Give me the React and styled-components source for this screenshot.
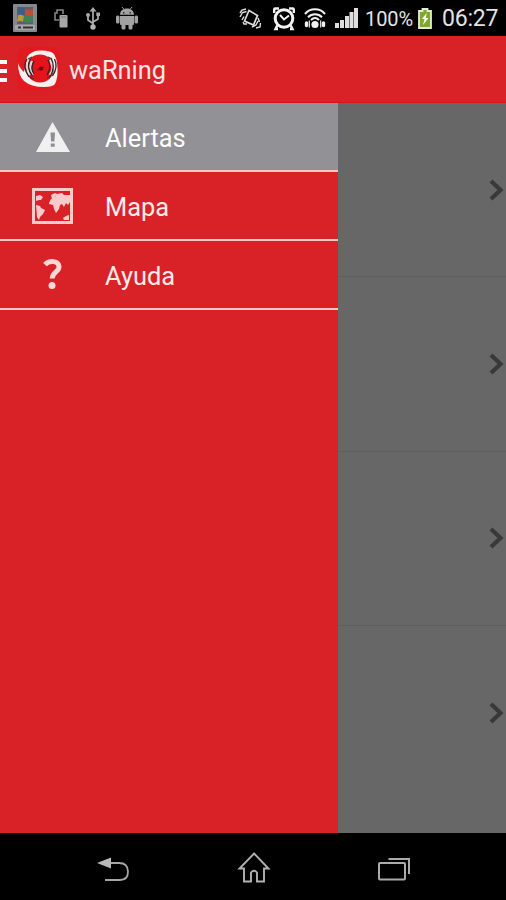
import React from "react";
import styled, { createGlobalStyle } from "styled-components";

const GlobalStyle = createGlobalStyle`
  * { box-sizing: border-box; }
  body { margin: 0; background: #000; font-family: Roboto, "Liberation Sans", sans-serif; }
`;

const Screen = styled.div`
  width: 506px;
  height: 900px;
  display: flex;
  flex-direction: column;
  overflow: hidden;
  background: #000;
`;

const StatusBar = styled.header`
  height: 36px;
  display: flex;
  align-items: center;
  justify-content: space-between;
  padding: 0 8px 0 13px;
  color: #e4e4e4;
`;

const StatusGroup = styled.div`
  display: flex;
  align-items: center;
  gap: ${(p) => p.$gap}px;
`;

const Icon = styled.svg`
  display: block;
  flex: none;
  overflow: visible;
`;

const BatteryLevel = styled.span`
  width: 47px;
  margin: 2px -4px 0 -3px;
  font-size: 20px;
  line-height: 24px;
  letter-spacing: -0.1px;
  white-space: nowrap;
`;

const Clock = styled.span`
  width: 56px;
  margin-top: 1px;
  font-size: 23px;
  line-height: 26px;
  letter-spacing: -0.2px;
  white-space: nowrap;
`;

const ActionBar = styled.div`
  height: 67px;
  display: flex;
  align-items: center;
  background: #d92228;
  border-bottom: 1px solid #d5141b;
`;

const MenuButton = styled.button`
  width: 8px;
  height: 22px;
  display: flex;
  flex-direction: column;
  justify-content: space-between;
  padding: 0;
  margin: 3px 9px 0 0;
  border: 0;
  background: transparent;
`;

const MenuLine = styled.span`
  height: 4px;
  width: 7px;
  background: #fff;
`;

const AppTitle = styled.h1`
  margin: 2px 0 0 9px;
  font-size: 25.4px;
  line-height: 32px;
  font-weight: 400;
  color: #fbe4e4;
`;

const Body = styled.main`
  height: 730px;
  display: flex;
`;

const Drawer = styled.nav`
  width: 338px;
  background: #d92228;
`;

const DrawerItem = styled.a`
  height: 69px;
  display: flex;
  align-items: center;
  border-bottom: 2px solid #fac9c8;
  background: ${(p) => (p.$active ? "#919196" : "#d92228")};
  color: ${(p) => (p.$active ? "#fcfcfc" : "#ffecea")};
`;

const IconSlot = styled.span`
  width: 105px;
  display: flex;
  justify-content: center;
`;

const ItemLabel = styled.span`
  margin-top: 3px;
  font-size: 25.4px;
  line-height: 32px;
`;

const Content = styled.section`
  flex: 1;
  background: #676767;
`;

const ListRow = styled.div`
  height: 174.4px;
  display: flex;
  align-items: center;
  justify-content: flex-end;
  padding-right: 2px;
  border-bottom: ${(p) => (p.$last ? "0" : "1px solid #5e5e5e")};
`;

const NavBar = styled.footer`
  height: 67px;
  display: flex;
  align-items: center;
  justify-content: space-between;
  padding: 5px 95px 0 97px;
`;

const PhotoIcon = () => (
  <Icon width="24" height="28" viewBox="0 0 24 28">
    <rect width="24" height="28" rx="1" fill="#85898d" />
    <rect x="4" y="3" width="16" height="17" fill="#5c6066" />
    <path d="M5 4q4-2 7 1l-1 7q-3-2-6-1z" fill="#375e8d" />
    <path d="M12 5q4 2 8 0v7q-4 1-8-1z" fill="#b45336" />
    <path d="M5 11q3-1 6 1l-1 6q-3-2-6 0z" fill="#b69a35" />
    <path d="M11 11q5 2 9 0v7q-5 2-9 0z" fill="#438059" />
    <path d="M2 21h20v5H2z" fill="#a4a6a8" />
    <path d="M5 23.500h3m2 0h10" stroke="#333" strokeWidth="2" />
  </Icon>
);

const ShareIcon = () => (
  <Icon width="14" height="19" viewBox="0 0 14 19">
    <path d="M9 5V1H3v3H1v7h4" fill="none" stroke="#858585" strokeWidth="1.600" />
    <rect x="5.500" y="6" width="8" height="12.500" rx="1" fill="#a6a6a6" />
    <path d="M7 8h5" stroke="#777" />
  </Icon>
);

const UsbIcon = () => (
  <Icon width="14" height="23" viewBox="0 0 14 23" fill="none" stroke="#a9a9a9">
    <path d="M8 3v17M8 16.500L3 13V9M8 15l5-3V8" strokeWidth="1.800" />
    <path d="M8 0l3.500 4.500h-7z" fill="#a9a9a9" stroke="none" />
    <circle cx="8" cy="20" r="2.700" fill="#b5b5b5" stroke="none" />
    <circle cx="3" cy="8" r="2" fill="#a9a9a9" stroke="none" />
    <path d="M11.300 5.500h3.700v3.500h-3.700z" fill="#a9a9a9" stroke="none" />
  </Icon>
);

const AndroidIcon = () => (
  <Icon width="22" height="24" viewBox="0 0 22 24" fill="#a2a2a2">
    <path d="M4 8.800c0-4 3-6.300 7-6.300s7 2.300 7 6.300zM4 10h14v8q0 1-1 1H5q-1 0-1-1z" />
    <path d="M6 1l2.500 3M16 1l-2.500 3" stroke="#a2a2a2" strokeWidth="1" />
    <rect x="0" y="9.500" width="3.500" height="8" rx="1.500" />
    <rect x="18.500" y="9.500" width="3.500" height="8" rx="1.500" />
    <rect x="5.500" y="17" width="4" height="6.500" rx="1.500" />
    <rect x="12.500" y="17" width="4" height="6.500" rx="1.500" />
    <path d="M7 6h1.500v1.500H7zM13.500 6H15v1.500h-1.500z" fill="#333" />
  </Icon>
);

const VibrateIcon = () => (
  <Icon width="22" height="21" viewBox="0 0 22 21" fill="none" stroke="#dedede">
    <path d="M10 2.500l8.500 5-4 9.500-9-4z" strokeWidth="1.700" />
    <path d="M1 5l2-3 4-1M1 9l2.500-4.500 4-1M3 12l2-3.500M19 10l1.500 4M21.500 15l-.5 4-4 1M13 19l4-2 2-4M4 14l1 2 3 0" strokeWidth="1.400" />
  </Icon>
);

const AlarmIcon = () => (
  <Icon width="22" height="23" viewBox="0 0 22 23" fill="none" stroke="#f2f2f2">
    <circle cx="11" cy="11.500" r="8.800" strokeWidth="3" />
    <path d="M7 8l4 4.500 5-4" strokeWidth="2" />
    <path d="M1.200 6V2.500q0-1 1-1H6M16 1.500h3.800q1 0 1 1V6M4.500 18l-2 4H5M17.500 18l2 4H17" strokeWidth="2.400" />
  </Icon>
);

const WifiIcon = () => (
  <Icon width="22" height="21" viewBox="0 0 22 21" fill="none" stroke="#efefef">
    <path d="M1 6C6-.2 16-.2 21 6M4 9.200c4-4 10-4 14 0M7 12c2.500-2.500 5.500-2.500 8 0" strokeWidth="2" />
    <circle cx="11" cy="16.500" r="3.600" fill="#efefef" stroke="none" />
    <path d="M2.500 15v2.500M19.500 15v2.500" strokeWidth="3.400" strokeLinecap="round" />
    <path d="M5.300 12.500v7M16.700 12.500v7" strokeWidth="1.200" />
  </Icon>
);

const SignalIcon = () => (
  <Icon width="23" height="20" viewBox="0 0 23 20" fill="#dedede">
    <path d="M0 15h4v5H0zM5 12h4v8H5zM10 8h4v12h-4zM14.500 4h4v16h-4zM19 0h4v20h-4z" />
  </Icon>
);

const BatteryIcon = () => (
  <Icon width="14" height="21" viewBox="0 0 14 21">
    <path d="M4.500 1h5v2H13v17H1V3h3.500z" fill="#7ea832" stroke="#e5ecd3" strokeWidth="1.800" />
    <path d="M8.500 5L4 11h2.500L5 17l5.500-7H8z" fill="#fff" />
  </Icon>
);

const AppLogo = () => (
  <Icon width="43" height="44" viewBox="0 0 43 44">
    <rect width="43" height="44" rx="9" fill="#e11a20" />
    <path
      d="M10 10Q14 4 22 3.500q10-.5 14 2.500 4 4 4.500 15 .5 10-2.500 16-2 3-11 3-13 0-20-6-6-6-6-18 2 6 6 9z"
      fill="#f6f1ef"
    />
    <ellipse cx="23" cy="21.500" rx="14" ry="14" fill="#e3141c" />
    <path d="M12 13q-4 8 1 15M15 14q-4 8 1 14" fill="none" stroke="#e4d6d7" strokeWidth="2.400" />
    <path d="M33 13q5 8 0 15" fill="none" stroke="#e4d6d7" strokeWidth="2.400" />
    <path
      d="M10 12q-5 8 2 18M13.500 12q-5 8 2 17M17 14q-4 7 0 13M31 13q4 7-1 15M34 11q5 9-1 19M37.500 12q4 8-2 17"
      fill="none"
      stroke="#2f2628"
      strokeWidth="1.300"
    />
    <path d="M11 12l4-2M31 10l4 2M13 30l4 2M30 31l4-2" fill="none" stroke="#453336" strokeWidth="1.200" />
    <circle cx="24" cy="21.500" r="2" fill="#45100e" />
    <path d="M20 23l3-1 4-2" fill="none" stroke="#781418" strokeWidth="1.200" />
  </Icon>
);

const WarningIcon = () => (
  <Icon width="34" height="30" viewBox="0 0 34 30">
    <path d="M16.500 0L34 30H0z" fill="#f0f0f1" />
    <path d="M14.500 10.500h4.500l-.6 9h-3.300zM14.800 21.500h3.900v3.300h-3.900z" fill="#8d8d92" />
  </Icon>
);

const MapIcon = () => (
  <Icon width="41" height="36" viewBox="0 0 41 36">
    <rect x="1.500" y="1.500" width="38" height="33" fill="#d92228" stroke="#fac9c9" strokeWidth="3" />
    <path
      d="M4 8l4-1 3 2-2 3-2 0-3 1zM4 17l4 1 1 2 4 2-2 4-3 3-1 3-2-3zM19 7l4-2 2 1-3 4-2 1zM17 15l2-4 4-2 2-3 5-1 2 2 6 0v7l-2 3-2-2-2 4-2-3-2 1-1 4-3 4-2-4-1-4-4-1zM31 30l3-2 3-1v5h-5z"
      fill="#fac9c9"
    />
  </Icon>
);

const HelpIcon = () => (
  <Icon width="19" height="32" viewBox="0 0 19 32">
    <path d="M2 5.700C6 1 16 1.500 16 8c0 5-6.800 5-6.800 11.500" fill="none" stroke="#ffd8d6" strokeWidth="4.900" />
    <circle cx="9" cy="26.500" r="3.500" fill="#ffd8d6" />
  </Icon>
);

const Chevron = () => (
  <Icon width="16" height="24" viewBox="0 0 16 24">
    <path d="M3 3l9.500 9L3 21" fill="none" stroke="#393939" strokeWidth="4.200" />
  </Icon>
);

const BackIcon = () => (
  <Icon width="33" height="25" viewBox="0 0 33 25">
    <path d="M12 6h10q9 0 9 8.500t-8 8.500H8" fill="none" stroke="#a5a5a5" strokeWidth="1.800" />
    <path d="M0 6l14-5.500v11z" fill="#b8b8b8" />
  </Icon>
);

const HomeIcon = () => (
  <Icon width="32" height="31" viewBox="0 0 32 31">
    <path d="M16-0.500l14.500 15H26v13h-7V18.500q-3-3.500-6 0v9H6v-13H1.500z" fill="none" stroke="#b1b1b1" strokeWidth="1.900" />
  </Icon>
);

const RecentsIcon = () => (
  <Icon width="33" height="24" viewBox="0 0 33 24" fill="none" stroke="#ababab" strokeWidth="2">
    <rect x="1" y="6" width="26" height="16.500" rx="1" />
    <path d="M10.500 2h20.500v15" />
  </Icon>
);

const menu = [
  { label: "Alertas", icon: <WarningIcon />, active: true },
  { label: "Mapa", icon: <MapIcon /> },
  { label: "Ayuda", icon: <HelpIcon /> },
];

const rows = [0, 1, 2, 3];

export default function App() {
  return (
    <Screen>
      <GlobalStyle />
      <StatusBar>
        <StatusGroup $gap={17}>
          <PhotoIcon />
          <ShareIcon />
          <UsbIcon />
          <AndroidIcon />
        </StatusGroup>
        <StatusGroup $gap={10}>
          <StatusGroup $gap={9}>
            <StatusGroup $gap={12}>
              <VibrateIcon />
              <AlarmIcon />
            </StatusGroup>
            <WifiIcon />
            <SignalIcon />
          </StatusGroup>
          <BatteryLevel>100%</BatteryLevel>
          <BatteryIcon />
          <Clock>06:27</Clock>
        </StatusGroup>
      </StatusBar>
      <ActionBar>
        <MenuButton aria-label="Menu">
          <MenuLine />
          <MenuLine />
          <MenuLine />
        </MenuButton>
        <AppLogo />
        <AppTitle>waRning</AppTitle>
      </ActionBar>
      <Body>
        <Drawer>
          {menu.map((item) => (
            <DrawerItem key={item.label} $active={item.active}>
              <IconSlot>{item.icon}</IconSlot>
              <ItemLabel>{item.label}</ItemLabel>
            </DrawerItem>
          ))}
        </Drawer>
        <Content>
          {rows.map((row) => (
            <ListRow key={row} $last={row === rows.length - 1}>
              <Chevron />
            </ListRow>
          ))}
        </Content>
      </Body>
      <NavBar>
        <BackIcon />
        <HomeIcon />
        <RecentsIcon />
      </NavBar>
    </Screen>
  );
}
